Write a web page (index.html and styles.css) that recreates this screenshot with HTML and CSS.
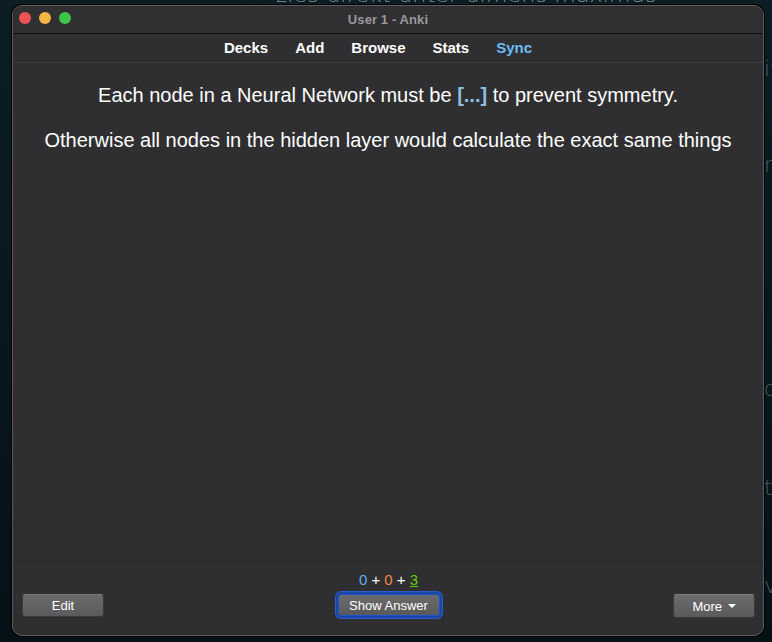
FILE: index.html
```html
<!DOCTYPE html>
<html>
<head>
<meta charset="utf-8">
<title>User 1 - Anki</title>
<link rel="stylesheet" href="styles.css">
</head>
<body>
<div class="desktop-text top-line">«‹› Lies direkt unter dimens maximus››</div>
<div class="desktop-text side s1">it</div>
<div class="desktop-text side s2">n</div>
<div class="desktop-text side s3">c</div>
<div class="desktop-text side s4">t</div>
<div class="desktop-text side s5">v</div>

<div class="window">
  <div class="titlebar">
    <div class="lights">
      <span class="light red"></span>
      <span class="light yellow"></span>
      <span class="light green"></span>
    </div>
    <div class="title">User 1 - Anki</div>
  </div>
  <nav class="toolbar">
    <span class="tab">Decks</span>
    <span class="tab">Add</span>
    <span class="tab">Browse</span>
    <span class="tab">Stats</span>
    <span class="tab sync">Sync</span>
  </nav>
  <main class="card">
    <p class="line">Each node in a Neural Network must be <span class="cloze">[...]</span> to prevent symmetry.</p>
    <p class="line">Otherwise all nodes in the hidden layer would calculate the exact same things</p>
  </main>
  <footer class="bottom">
    <div class="counts"><span class="c-new">0</span> + <span class="c-learn">0</span> + <span class="c-review">3</span></div>
    <button class="btn edit">Edit</button>
    <button class="btn show">Show Answer</button>
    <button class="btn more">More <span class="caret"></span></button>
  </footer>
</div>
</body>
</html>
```

FILE: styles.css
```css
* { box-sizing: border-box; }
html, body { margin: 0; height: 100%; }
body {
  position: relative;
  width: 772px;
  height: 642px;
  overflow: hidden;
  background: linear-gradient(180deg, #0c1d23 0%, #08171c 60%, #061116 100%);
  font-family: "Liberation Sans", Arial, sans-serif;
  padding: 5px 8px 0 12px;
}
.desktop-text {
  position: absolute;
  font-family: "DejaVu Sans", sans-serif;
  font-weight: 300;
  font-size: 22px;
  line-height: 1;
  z-index: 0;
}
.top-line { left: 236px; top: -16px; letter-spacing: 0.2px; color: #7f9096; }
.side { left: 764px; color: #505a5e; }
.s1 { top: 58px; }
.s2 { top: 154px; }
.s3 { top: 378px; }
.s4 { top: 477px; }
.s5 { top: 575px; }

.window {
  position: relative;
  z-index: 1;
  width: 752px;
  height: 631px;
  background: #2f2f31;
  border: 1px solid #5c5c5e;
  border-radius: 10px;
  box-shadow: 0 0 0 1px #000;
  display: flex;
  flex-direction: column;
  overflow: hidden;
}
.titlebar {
  height: 28px;
  flex: none;
  display: flex;
  align-items: center;
  justify-content: center;
  position: relative;
  background: #302f31;
  border-bottom: 1px solid #0e0e0f;
}
.lights {
  position: absolute;
  left: 6px;
  top: 6px;
  display: flex;
  gap: 8px;
}
.light { width: 12px; height: 12px; border-radius: 50%; display: block; }
.red { background: #ee5457; }
.yellow { background: #f4b641; }
.green { background: #3ec549; }
.title {
  color: #9a9a9b;
  font-size: 13px;
  font-weight: bold;
  letter-spacing: 0.1px;
}
.toolbar {
  height: 29px;
  flex: none;
  display: flex;
  justify-content: center;
  align-items: center;
  gap: 27px;
  border-bottom: 1px solid #3d3d3f;
  padding: 0 20px 2px 0;
}
.tab {
  color: #ffffff;
  font-size: 15px;
  font-weight: bold;
}
.tab.sync { color: #6cbcf6; }

.card {
  flex: 1;
  padding-top: 21px;
  text-align: center;
}
.line {
  margin: 0 0 22px;
  color: #ffffff;
  font-size: 20px;
  line-height: 23px;
}
.cloze { color: #8cbfe0; font-weight: bold; }

.bottom {
  flex: none;
  height: 74px;
  border-top: 1px solid #262628;
  display: grid;
  grid-template-columns: 1fr auto 1fr;
  grid-template-rows: 17px 23px;
  row-gap: 6px;
  padding: 9px 8px 0 9px;
}
.counts {
  grid-column: 2;
  grid-row: 1;
  text-align: center;
  color: #ffffff;
  font-size: 15px;
  line-height: 17px;
}
.c-new { color: #5fb0f2; }
.c-learn { color: #f3884a; }
.c-review { color: #5ecc10; text-decoration: underline; }

.btn {
  font-family: "Liberation Sans", Arial, sans-serif;
  font-size: 13px;
  color: #ffffff;
  background: linear-gradient(180deg, #6b6b6d 0%, #5a5a5c 100%);
  border: 1px solid #3a3a3c;
  border-top-color: #7a7a7c;
  border-radius: 3px;
  height: 23px;
  padding: 0;
  margin: 0;
  grid-row: 2;
}
.edit { grid-column: 1; justify-self: start; width: 82px; }
.show {
  grid-column: 2;
  width: 102px;
  height: 22px;
  border: 1px solid #1b54d0;
  box-shadow: 0 0 0 2px #1a47a6, 0 0 0 3px #2a5ccc;
}
.more { grid-column: 3; justify-self: end; width: 82px; height: 24px; }
.caret {
  display: inline-block;
  width: 0;
  height: 0;
  border-left: 4px solid transparent;
  border-right: 4px solid transparent;
  border-top: 4px solid #ffffff;
  vertical-align: middle;
  margin-left: 2px;
  margin-bottom: 2px;
}
```
